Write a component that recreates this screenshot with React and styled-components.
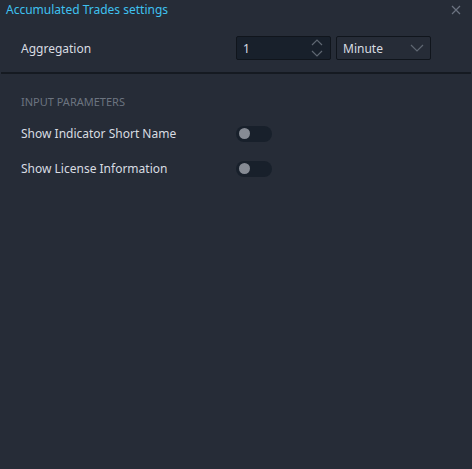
import React, { useState } from 'react';
import styled, { createGlobalStyle } from 'styled-components';

const GlobalStyle = createGlobalStyle`
  html, body {
    margin: 0;
    padding: 0;
    background: #262c37;
  }
  body {
    font-family: "Noto Sans", "Open Sans", sans-serif;
  }
`;

const Panel = styled.div`
  width: 472px;
  height: 469px;
  background: #262c37;
  color: #d8dce2;
  font-size: 12px;
  box-sizing: border-box;
  display: flex;
  flex-direction: column;
`;

const Header = styled.div`
  display: flex;
  align-items: center;
  justify-content: space-between;
  height: 20px;
  padding: 0 6px 0 6px;
`;

const Title = styled.div`
  color: #3fc1f0;
  font-size: 12px;
  line-height: 20px;
`;

const CloseButton = styled.button`
  border: none;
  background: none;
  padding: 0;
  width: 12px;
  height: 12px;
  margin-right: 4px;
  display: flex;
  align-items: center;
  justify-content: center;
  cursor: pointer;
`;

const TopSection = styled.div`
  padding: 16px 0 12px 20px;
  border-bottom: 2px solid #151a21;
  margin: 0 1px;
`;

const Row = styled.div`
  display: flex;
  align-items: center;
  height: ${p => p.$h || 24}px;
`;

const Label = styled.div`
  width: 215px;
  color: #d8dce2;
`;

const InputBox = styled.div`
  width: 95px;
  height: 24px;
  box-sizing: border-box;
  background: ${p => (p.$dark ? '#18202b' : '#262c37')};
  border: 1px solid #10151c;
  border-radius: 2px;
  display: flex;
  align-items: center;
  justify-content: space-between;
  padding: 0 6px 0 6px;
  margin-right: 5px;
  color: #d8dce2;
`;

const Section = styled.div`
  padding: 20px 0 0 21px;
`;

const SectionTitle = styled.div`
  color: #6c7480;
  font-size: 11px;
  height: 16px;
  line-height: 16px;
  margin-bottom: 6px;
`;

const Toggle = styled.div`
  width: 36px;
  height: 16px;
  border-radius: 8px;
  background: #18202b;
  box-sizing: border-box;
  display: flex;
  align-items: center;
  padding-left: 3px;
  cursor: pointer;
`;

const Knob = styled.div`
  width: 11px;
  height: 11px;
  border-radius: 50%;
  background: #868b94;
`;

const Spinner = () => (
  <svg width="14" height="20" viewBox="0 0 14 20">
    <path d="M2 7 L7 2 L12 7" fill="none" stroke="#5f6772" strokeWidth="1.2" />
    <path d="M2 13 L7 18 L12 13" fill="none" stroke="#5f6772" strokeWidth="1.2" />
  </svg>
);

const Chevron = () => (
  <svg width="14" height="8" viewBox="0 0 14 8">
    <path d="M1 1 L7 7 L13 1" fill="none" stroke="#5f6772" strokeWidth="1.2" />
  </svg>
);

const params = ['Show Indicator Short Name', 'Show License Information'];

export default function App() {
  const [value] = useState('1');
  return (
    <>
      <GlobalStyle />
      <Panel>
        <Header>
          <Title>Accumulated Trades settings</Title>
          <CloseButton>
            <svg width="10" height="10" viewBox="0 0 10 10">
              <path d="M1 1 L9 9 M9 1 L1 9" stroke="#6b7380" strokeWidth="1.2" />
            </svg>
          </CloseButton>
        </Header>
        <TopSection>
          <Row>
            <Label>Aggregation</Label>
            <InputBox $dark>
              <span>{value}</span>
              <Spinner />
            </InputBox>
            <InputBox>
              <span>Minute</span>
              <Chevron />
            </InputBox>
          </Row>
        </TopSection>
        <Section>
          <SectionTitle>INPUT PARAMETERS</SectionTitle>
          {params.map(p => (
            <Row key={p} $h={35}>
              <Label>{p}</Label>
              <Toggle>
                <Knob />
              </Toggle>
            </Row>
          ))}
        </Section>
      </Panel>
    </>
  );
}
